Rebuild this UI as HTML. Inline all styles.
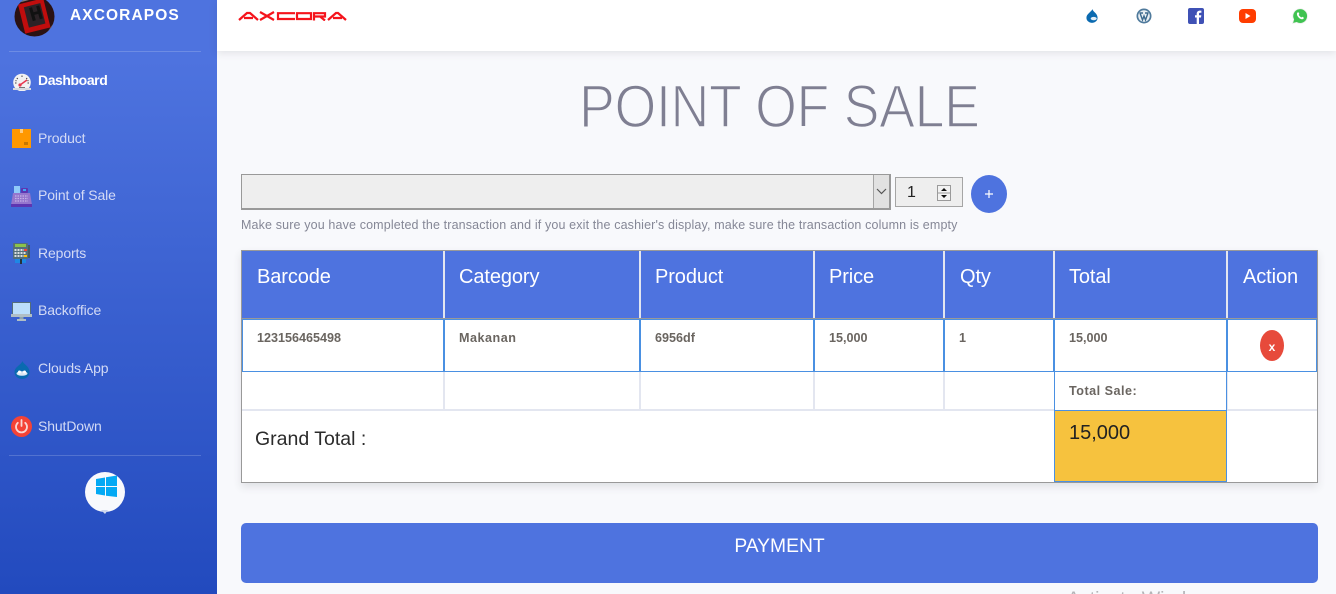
<!DOCTYPE html>
<html><head><meta charset="utf-8"><title>Point of Sale</title>
<style>
*{box-sizing:border-box}
html,body{margin:0;padding:0;width:1336px;height:594px;overflow:hidden;background:#f8f9fc;font-family:"Liberation Sans",sans-serif}
#root{position:relative;width:1336px;height:594px;overflow:hidden}
.a{position:absolute;white-space:nowrap}
#side{left:0;top:0;width:217px;height:594px;background:linear-gradient(180deg,#4e73df 10%,#224abe 100%)}
.nav{position:absolute;left:38px;font-size:14px;line-height:18px;color:#d3daf5;white-space:nowrap;letter-spacing:-.12px}
.hr{position:absolute;left:9px;width:192px;height:1px;background:rgba(255,255,255,.18)}
.ic{position:absolute}
.th{position:absolute;top:251px;height:67px;background:#4e73df;color:#fff;font-size:20px;line-height:53px;white-space:nowrap;letter-spacing:-.1px}
.td{position:absolute;font-weight:bold;font-size:12.6px;color:#6a6560;white-space:nowrap}
.b{position:absolute;background:#4a90e2}
.g{position:absolute;background:#e3e6f0}
</style></head><body><div id="root">
<div class="a" id="side"></div>
<svg class="ic" style="left:14px;top:-4px" width="41" height="41" viewBox="0 0 41 41"><defs><clipPath id="c"><circle cx="20.5" cy="20.5" r="20"/></clipPath></defs><g clip-path="url(#c)"><rect width="41" height="41" fill="#2a1214"/><path d="M0 8L14 0H41V41H30L41 25V14L30 0Z" fill="#7d7d7d"/><rect x="7" y="5" width="26" height="30" fill="#c00d0d" transform="rotate(-14 20 19)"/><rect x="12" y="9" width="17" height="21" fill="#2b2226" transform="rotate(-14 20 19)"/><path d="M15 12l3-.8 1.500 5 4-1-1.300-5 3-.8 3.700 13-3 .8-1.600-5.300-4 1 1.500 5.400-3 .8z" fill="#111"/></g></svg>
<div class="a" style="left:70px;top:7px;font-size:15.5px;line-height:18px;font-weight:bold;color:#fff;letter-spacing:1.1px">AXCORAPOS</div>
<div class="hr" style="top:51px"></div>
<svg class="ic" style="left:12px;top:73px" width="20" height="18" viewBox="0 0 20 18"><circle cx="10" cy="9.500" r="8.800" fill="#f2f2f2"/><path d="M1 15h18v2H1z" fill="#d8dbe0"/><path d="M3 10h1.500M4.800 5l1 1M10 2.500V4M15.200 5l-1 1M15.500 10H17M3.500 7.500l1 .4M16.500 7.500l-1 .4" stroke="#444" stroke-width="1"/><path d="M8 12l7-5" stroke="#e8384f" stroke-width="1.500"/><circle cx="8" cy="12" r="1.600" fill="#e8384f"/><path d="M7 14.500h6" stroke="#777"/></svg>
<div class="nav" style="top:71px;color:#fff;font-weight:bold;letter-spacing:-.42px">Dashboard</div>
<svg class="ic" style="left:12px;top:129px" width="19" height="19" viewBox="0 0 19 19"><rect width="19" height="19" fill="#ff9800"/><rect x="8" width="3" height="4" fill="#ffcc80"/><rect x="12" y="13" width="4" height="3" fill="#c77700"/></svg>
<div class="nav" style="top:129px">Product</div>
<svg class="ic" style="left:11px;top:186px" width="21" height="21" viewBox="0 0 21 21"><rect x="3" y="0" width="6" height="7" fill="#90caf9"/><rect x="10" y="2" width="7" height="5" rx="1" fill="#5e35b1"/><rect x="12" y="3" width="3" height="2" fill="#42a5f5"/><path d="M2 7H19L21 19H0Z" fill="#9575cd"/><rect x="0" y="18" width="21" height="3" fill="#5e35b1"/><path d="M4 10h13M4 12.500h13M4 15h13" stroke="#c5b3e6" stroke-width="1.200" stroke-dasharray="1.500 1"/></svg>
<div class="nav" style="top:186px">Point of Sale</div>
<svg class="ic" style="left:13px;top:243px" width="17" height="21" viewBox="0 0 17 21"><rect x="14" y="2" width="3" height="13" fill="#455a64"/><rect width="15" height="16" rx="1" fill="#546e7a"/><rect x="2" y="1" width="11" height="3" fill="#8bc34a"/><path d="M1.500 7h12M1.500 10h12M1.500 13h12" stroke="#eceff1" stroke-width="1.700" stroke-dasharray="2 1"/><rect x="11" y="6" width="3" height="2" fill="#f44336"/><rect x="11" y="12" width="3" height="2" fill="#ffc107"/><rect x="2" y="16" width="11" height="4" fill="#1e88e5"/><rect x="7" y="16" width="2" height="5" fill="#263238"/></svg>
<div class="nav" style="top:244px">Reports</div>
<svg class="ic" style="left:11px;top:302px" width="21" height="19" viewBox="0 0 21 19"><rect x="1" y="0" width="19" height="13" fill="#546e7a"/><rect x="2" y="1" width="17" height="11" fill="#bbdefb"/><rect y="12" width="21" height="3" fill="#b0bec5"/><rect x="8.500" y="15" width="4" height="2" fill="#90a4ae"/><rect x="6" y="17" width="9" height="2" fill="#b0bec5"/></svg>
<div class="nav" style="top:301px">Backoffice</div>
<svg class="ic" style="left:14px;top:361px" width="16" height="18" viewBox="0 0 16 18"><path d="M8.500 0C9 3 15.500 5 15.500 11A7.500 7 0 0 1 .5 11C.5 6 7 4 8.500 0Z" fill="#0a6ab0"/><ellipse cx="8" cy="12.500" rx="5.500" ry="2.300" fill="#dce8f2"/><circle cx="5.500" cy="11" r="1.500" fill="#fff"/><circle cx="10.500" cy="11" r="1.500" fill="#fff"/></svg>
<div class="nav" style="top:359px">Clouds App</div>
<svg class="ic" style="left:11px;top:416px" width="21" height="21" viewBox="0 0 21 21"><circle cx="10.500" cy="10.500" r="10.500" fill="#f44336"/><path d="M6.800 6.800a5.500 5.500 0 1 0 7.400 0" fill="none" stroke="#f8d7d4" stroke-width="1.800" stroke-linecap="round"/><path d="M10.500 4v6" stroke="#f8d7d4" stroke-width="1.800" stroke-linecap="round"/></svg>
<div class="nav" style="top:417px">ShutDown</div>
<div class="hr" style="top:455px"></div>
<svg class="ic" style="left:85px;top:472px" width="40" height="44" viewBox="0 0 40 44"><circle cx="20" cy="20" r="20" fill="#f8f9fc"/><path d="M16 38l4 4 3-4z" fill="#cfd8ee"/><path d="M11 7l9-1.500V14H11ZM21 5.300L32 3.500V14H21ZM11 15h9v8.500L11 22ZM21 15h11v10L21 23.700Z" fill="#03a9f4"/></svg>

<div class="a" style="left:217px;top:0;width:1119px;height:51px;background:#fff;box-shadow:0 2px 8px rgba(58,59,69,.12)"></div>
<svg class="ic" style="left:238px;top:11px" width="110" height="10" viewBox="0 0 110 10"><g fill="none" stroke="#f5141c" stroke-width="2.200"><path d="M1 9L9 2h3l8 7M6 7h9"/><path d="M22 1l14 8M36 1L22 9"/><path d="M57 2.200H40V8h17"/><path d="M59 2.200h14V8H59z"/><path d="M76 9.500V2.200h11V5.500H77M82 5.500l5 4"/><path d="M90 9l8-7h2l8 7M95 7h9"/></g></svg>
<svg class="ic" style="left:1086px;top:9px" width="12" height="14" viewBox="0 0 14 16"><path d="M7.500 0C8 3 13.500 5 13.500 10A6.500 6 0 0 1 .5 10C.5 5.500 6 3.500 7.500 0Z" fill="#0a6ab0"/><ellipse cx="9" cy="11" rx="3.500" ry="2" fill="#e3eef6"/></svg>
<svg class="ic" style="left:1136px;top:8px" width="16" height="16" viewBox="0 0 16 16"><circle cx="8" cy="8" r="7.500" fill="#4f7a9c"/><circle cx="8" cy="8" r="5.800" fill="#e9eff3"/><path d="M4 5l2.500 7L8 8l1.500 4L12 5M3.500 5H7M9 5h3.500" fill="none" stroke="#3d6a8e" stroke-width="1.400"/></svg>
<svg class="ic" style="left:1188px;top:8px" width="16" height="16" viewBox="0 0 16 16"><rect width="16" height="16" rx="2" fill="#3f51b5"/><path d="M11 16V9.500h2l.3-2.300H11V6c0-.8.300-1.200 1.200-1.200h1.200V2.600H12C9.800 2.600 8.700 3.900 8.700 5.800v1.400H7v2.300h1.700V16z" fill="#fff"/></svg>
<svg class="ic" style="left:1239px;top:9px" width="17" height="14" viewBox="0 0 17 14"><rect width="17" height="14" rx="4" fill="#ff3d00"/><path d="M6.500 4v6l5-3z" fill="#fff"/></svg>
<svg class="ic" style="left:1292px;top:8px" width="16" height="16" viewBox="0 0 16 16"><path d="M.5 15.500l1.200-4A7.300 7.300 0 1 1 4.500 14.400z" fill="#40c351" stroke="#eee" stroke-width=".8"/><path d="M5.500 4.500C4.500 5.500 4.800 7.500 6.500 9.400S10.500 11.800 11.500 10.700l.4-1-1.700-1-.8.800C8.600 9.200 7.200 7.900 6.700 6.800l.7-.8-.9-1.700z" fill="#fff"/></svg>

<div class="a" style="left:579px;top:73px;font-size:60px;line-height:68px;color:#7f7f92;letter-spacing:-.4px;transform:scaleX(.896);transform-origin:0 0;-webkit-text-stroke:1.6px #f8f9fc">POINT OF SALE</div>

<div class="a" style="left:241px;top:174px;width:650px;height:36px;background:#eee;border:1px solid #999;border-width:1px 2px 2px 1px"></div>
<div class="a" style="left:873px;top:175px;width:16px;height:33px;background:#e1e1e1;border-left:1px solid #a5a5a5"></div>
<svg class="ic" style="left:876px;top:188px" width="11" height="7" viewBox="0 0 11 7"><path d="M1 1l4.500 4.500L10 1" fill="none" stroke="#555" stroke-width="1.200"/></svg>
<div class="a" style="left:895px;top:177px;width:68px;height:30px;background:#eee;border:1px solid #a5a5a5;font-size:16px;line-height:29px;padding-left:11px;color:#222">1</div>
<svg class="ic" style="left:937px;top:185px" width="14" height="16" viewBox="0 0 14 16"><rect x=".5" y=".5" width="13" height="15" fill="#f2f2f2" stroke="#9a9a9a"/><path d="M0 8h14" stroke="#9a9a9a"/><path d="M7 3l3 3H4zM7 13l3-3H4z" fill="#111"/></svg>
<div class="a" style="left:971px;top:175px;width:36px;height:38px;border-radius:50%;background:#4e73df"></div>
<svg class="ic" style="left:984px;top:189px" width="10" height="10" viewBox="0 0 10 10"><path d="M5 1v8M1 5h8" stroke="#fff" stroke-width="1.200"/></svg>
<div class="a" style="left:241px;top:217px;font-size:12.500px;line-height:17px;color:#858796;letter-spacing:.14px">Make sure you have completed the transaction and if you exit the cashier's display, make sure the transaction column is empty</div>

<div class="a" style="left:241px;top:250px;width:1077px;height:233px;background:#fff;border:1px solid #999;box-shadow:0 4px 8px rgba(58,59,69,.12)"></div>
<div class="g" style="left:242px;top:251px;width:1075px;height:67px"></div>
<div class="th" style="left:242px;width:201px;padding-left:15px">Barcode</div>
<div class="th" style="left:445px;width:194px;padding-left:14px">Category</div>
<div class="th" style="left:641px;width:172px;padding-left:14px">Product</div>
<div class="th" style="left:815px;width:128px;padding-left:14px">Price</div>
<div class="th" style="left:945px;width:108px;padding-left:15px">Qty</div>
<div class="th" style="left:1055px;width:171px;padding-left:14px">Total</div>
<div class="th" style="left:1228px;width:89px;padding-left:15px">Action</div>
<div class="a" style="left:242px;top:318px;width:1075px;height:1px;background:#999"></div>

<div class="b" style="left:242px;top:319px;width:1075px;height:1px"></div>
<div class="b" style="left:242px;top:371px;width:1075px;height:1px"></div>
<div class="b" style="left:242px;top:319px;width:1px;height:53px"></div>
<div class="b" style="left:443px;top:319px;width:2px;height:53px"></div>
<div class="b" style="left:639px;top:319px;width:2px;height:53px"></div>
<div class="b" style="left:813px;top:319px;width:2px;height:53px"></div>
<div class="b" style="left:943px;top:319px;width:2px;height:53px"></div>
<div class="b" style="left:1053px;top:319px;width:2px;height:53px"></div>
<div class="b" style="left:1226px;top:319px;width:2px;height:53px"></div>
<div class="b" style="left:1316px;top:319px;width:1px;height:53px"></div>

<div class="td" style="left:257px;top:331px;line-height:15px">123156465498</div>
<div class="td" style="left:459px;top:331px;line-height:15px;letter-spacing:.5px">Makanan</div>
<div class="td" style="left:655px;top:331px;line-height:15px">6956df</div>
<div class="td" style="left:829px;top:331px;line-height:15px">15,000</div>
<div class="td" style="left:959px;top:331px;line-height:15px">1</div>
<div class="td" style="left:1069px;top:331px;line-height:15px">15,000</div>
<div class="a" style="left:1260px;top:330px;width:24px;height:31px;border-radius:50%;background:#e74a3b;color:#fff;font-size:12px;font-weight:bold;line-height:34px;text-align:center">x</div>

<div class="g" style="left:443px;top:372px;width:2px;height:38px"></div>
<div class="g" style="left:639px;top:372px;width:2px;height:38px"></div>
<div class="g" style="left:813px;top:372px;width:2px;height:38px"></div>
<div class="g" style="left:943px;top:372px;width:2px;height:38px"></div>
<div class="g" style="left:1226px;top:372px;width:2px;height:38px"></div>
<div class="g" style="left:242px;top:409px;width:1075px;height:2px"></div>

<div class="a" style="left:1054px;top:372px;width:173px;height:39px;background:#fff;border:1px solid #4a90e2;border-top:0"></div>
<div class="td" style="left:1069px;top:384px;line-height:15px;letter-spacing:.5px">Total Sale:</div>
<div class="a" style="left:255px;top:428px;font-size:19.500px;line-height:23px;color:#2b2b2b">Grand Total :</div>
<div class="a" style="left:1054px;top:410px;width:173px;height:72px;background:#f6c23e;border:1px solid #4a90e2;font-size:20px;line-height:22px;color:#222;padding:11px 0 0 14px">15,000</div>

<div class="a" style="left:241px;top:523px;width:1077px;height:60px;background:#4e73df;border-radius:5px;color:#fff;font-size:19.300px;line-height:44px;text-align:center;padding-top:2px">PAYMENT</div>
<div class="a" style="left:1067px;top:589px;font-size:19.500px;line-height:20px;color:#b5b5b8">Activate Windows</div>
</div></body></html>
